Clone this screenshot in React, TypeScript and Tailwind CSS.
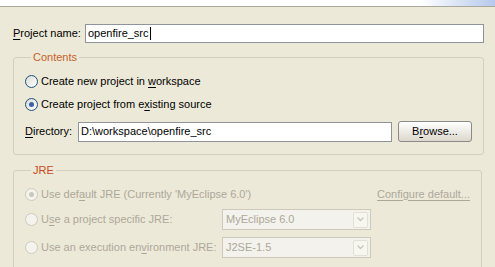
import React from 'react';

const font = { fontFamily: '"Liberation Sans", Arial, sans-serif' };

const U = ({ children }: { children: React.ReactNode }) => <span className="underline underline-offset-[2px]">{children}</span>;

const Radio = ({ checked, disabled }: { checked?: boolean; disabled?: boolean }) => (
  <span
    className={
      'flex h-[13px] w-[13px] shrink-0 items-center justify-center rounded-full border ' +
      (disabled ? 'border-[#cdcabb] bg-[#f4f3ee]' : 'border-[#1c5180] bg-gradient-to-br from-[#dcdcd6] to-white')
    }
  >
    {checked && <span className={'h-[5px] w-[5px] rounded-full ' + (disabled ? 'bg-[#cac8bb]' : 'bg-[#3b62a8]')} />}
  </span>
);

const Combo = ({ value }: { value: string }) => (
  <div className="flex h-[21px] w-[149px] items-center border border-[#cdcabb] bg-[#f3f2ec] pl-[3px] pr-[2px] text-[#aca899]">
    <span className="flex-1">{value}</span>
    <span className="flex h-[16px] w-[15px] items-center justify-center rounded-[2px] border border-[#e2e0d6] bg-[#f7f6f1]">
      <svg width="7" height="5" viewBox="0 0 7 5">
        <path d="M0.5 0.5 L3.5 3.5 L6.5 0.5" fill="none" stroke="#c9c7ba" strokeWidth="1.4" />
      </svg>
    </span>
  </div>
);

export default function App() {
  return (
    <div className="h-[267px] w-[495px] overflow-hidden bg-[#ece9d8] text-[11px] leading-[13px] text-black" style={font}>
      {/* banner strip */}
      <div className="h-[7px] border-b border-[#aca899] bg-gradient-to-r from-white from-[85%] to-[#b6c9ec]" />

      {/* project name */}
      <div className="mt-[17px] flex items-center pl-[13px] pr-[11px]">
        <span className="w-[72px]"><U>P</U>roject name:</span>
        <div className="flex h-[19px] flex-1 items-center border border-[#8f949a] bg-white pl-[2px]">
          openfire_src<span className="ml-[1px] h-[13px] w-[1px] bg-black" />
        </div>
      </div>

      {/* contents group */}
      <fieldset className="mx-[13px] mt-[8px] rounded-[3px] border border-[#d0d0bf] pb-[12px] pl-[11px] pr-[11px] pt-[6px]">
        <legend className="ml-[6px] px-[2px] text-[#c8602a]">Contents</legend>
        <div className="flex h-[23px] items-center gap-[3px]">
          <Radio />
          <span>Create new project in <U>w</U>orkspace</span>
        </div>
        <div className="flex h-[23px] items-center gap-[3px]">
          <Radio checked />
          <span>Create project from e<U>x</U>isting source</span>
        </div>
        <div className="mt-[5px] flex h-[21px] items-center">
          <span className="w-[53px]"><U>D</U>irectory:</span>
          <div className="flex h-[20px] w-[314px] items-center border border-[#8f949a] bg-white pl-[2px]">D:\workspace\openfire_src</div>
          <button className="ml-[6px] flex h-[21px] w-[74px] items-center justify-center rounded-[3px] border border-[#8a8a8a] bg-gradient-to-b from-white to-[#dcd8cc]">
            B<U>r</U>owse...
          </button>
        </div>
      </fieldset>

      {/* JRE group */}
      <fieldset className="mx-[13px] mt-[9px] rounded-[3px] border border-[#d0d0bf] pl-[11px] pr-[11px] pt-[6px] text-[#aca899]">
        <legend className="ml-[6px] px-[2px] text-[#c94a1c]">JRE</legend>
        <div className="flex h-[22px] items-center gap-[3px]">
          <Radio checked disabled />
          <span className="flex-1 whitespace-nowrap">Use def<U>a</U>ult JRE (Currently 'MyEclipse 6.0')</span>
          <span className="underline underline-offset-[2px]">Configure default...</span>
        </div>
        <div className="mt-[4px] flex items-center">
          <div className="flex w-[197px] items-center gap-[3px] whitespace-nowrap">
            <Radio disabled />
            <span>U<U>s</U>e a project specific JRE:</span>
          </div>
          <Combo value="MyEclipse 6.0" />
        </div>
        <div className="mt-[7px] flex items-center">
          <div className="flex w-[197px] items-center gap-[3px] whitespace-nowrap">
            <Radio disabled />
            <span>Use an execution en<U>v</U>ironment JRE:</span>
          </div>
          <Combo value="J2SE-1.5" />
        </div>
        <div className="h-[20px]" />
      </fieldset>
    </div>
  );
}
